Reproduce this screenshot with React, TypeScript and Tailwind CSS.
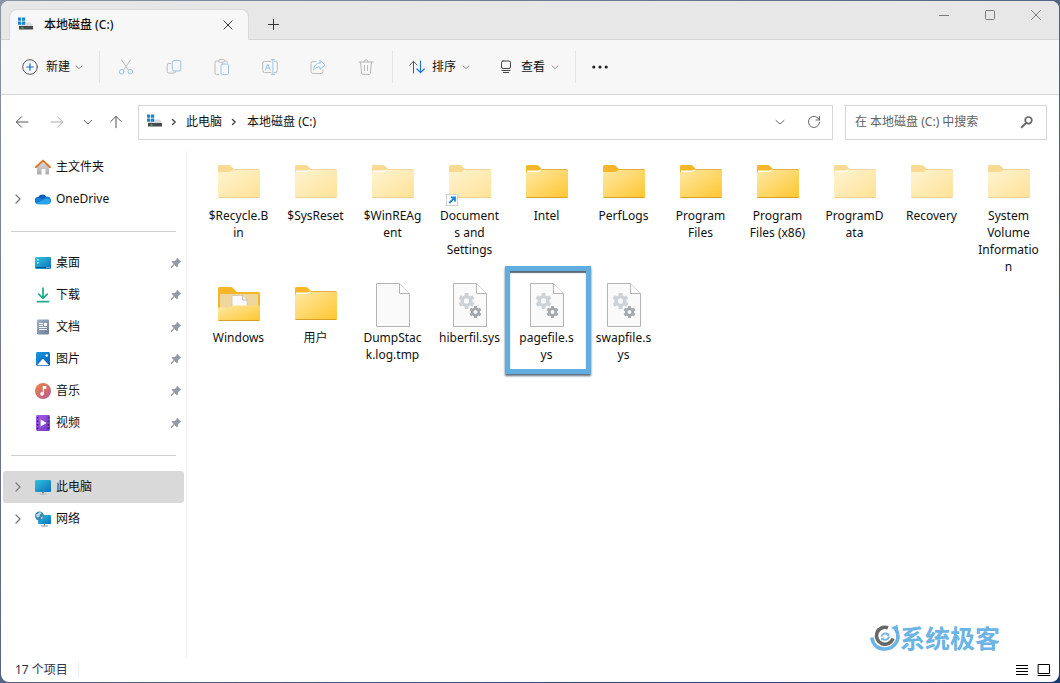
import { ReactNode } from 'react';

type FileKind = 'folder' | 'folder-open' | 'blank' | 'system';

interface FileItem {
    name: string;
    kind: FileKind;
    hidden?: boolean;
    filled?: boolean;
    shortcut?: boolean;
    highlighted?: boolean;
}

const files: FileItem[] = [
    { name: '$Recycle.B\nin', kind: 'folder', hidden: true },
    { name: '$SysReset', kind: 'folder', hidden: true, filled: true },
    { name: '$WinREAg\nent', kind: 'folder', hidden: true, filled: true },
    { name: 'Document\ns and\nSettings', kind: 'folder', hidden: true, shortcut: true },
    { name: 'Intel', kind: 'folder', filled: true },
    { name: 'PerfLogs', kind: 'folder' },
    { name: 'Program\nFiles', kind: 'folder', filled: true },
    { name: 'Program\nFiles (x86)', kind: 'folder', filled: true },
    { name: 'ProgramD\nata', kind: 'folder', hidden: true, filled: true },
    { name: 'Recovery', kind: 'folder', hidden: true },
    { name: 'System\nVolume\nInformatio\nn', kind: 'folder', hidden: true },
    { name: 'Windows', kind: 'folder-open' },
    { name: '用户', kind: 'folder', filled: true },
    { name: 'DumpStac\nk.log.tmp', kind: 'blank' },
    { name: 'hiberfil.sys', kind: 'system' },
    { name: 'pagefile.s\nys', kind: 'system', highlighted: true },
    { name: 'swapfile.s\nys', kind: 'system' },
];

/* ---------- small line icons ---------- */

const Line = ({ children, size = 16, className = '' }: { children: ReactNode; size?: number; className?: string }) => (
    <svg width={size} height={size} viewBox={`0 0 ${size} ${size}`} fill="none" stroke="currentColor" strokeLinecap="round" strokeLinejoin="round" className={`shrink-0 ${className}`} aria-hidden="true">
        {children}
    </svg>
);

const ChevronSmall = () => (
    <Line size={8} className="text-[#8a8a8a]"><path d="M1 2.8 4 5.6 7 2.8" /></Line>
);

const ChevronRight = () => (
    <Line size={8} className="text-[#444]"><path d="M2.5 1.5 5.2 4 2.5 6.5" strokeWidth="1.4" /></Line>
);

const DriveIcon = () => (
    <svg width="16" height="16" viewBox="0 0 16 16" aria-hidden="true" className="shrink-0">
        <path d="M3 5.5h10l2 3.5H1z" fill="#d9dadb" />
        <path d="M1 9h14v3.5H1z" fill="#45494c" />
        <path d="M3.500 10.300h2v1.200h-2z" fill="#3ddc5a" />
        <path d="M0 .5h3.200v3.200H0zM4 .5h3.200v3.200H4zM0 4.500h3.200v3.200H0zM4 4.500h3.200v3.200H4z" fill="#1b84cf" />
    </svg>
);

const toolIcons: { label: string; icon: ReactNode }[] = [
    {
        label: '剪切',
        icon: (
            <Line>
                <path d="m3.5.8 6.7 10M12.5.8l-6.7 10" stroke="#b9b9b9" />
                <circle cx="3.6" cy="12.8" r="2.3" stroke="#9bc5e6" />
                <circle cx="12.4" cy="12.8" r="2.3" stroke="#9bc5e6" />
            </Line>
        ),
    },
    {
        label: '复制',
        icon: (
            <Line>
                <path d="M4.8 4.5H3A1.8 1.8 0 0 0 1.2 6.3v6A1.8 1.8 0 0 0 3 14.1h5a1.8 1.8 0 0 0 1.8-1.8" stroke="#bcbcbc" />
                <rect x="6.3" y="1.5" width="8.5" height="10.5" rx="1.8" stroke="#9bc5e6" />
            </Line>
        ),
    },
    {
        label: '粘贴',
        icon: (
            <Line>
                <path d="M4.5 2h-2A1.5 1.5 0 0 0 1 3.500V14a1.5 1.5 0 0 0 1.5 1.5H5M10.500 2h1.700a1.400 1.400 0 0 1 1.300 1.300" stroke="#bcbcbc" />
                <rect x="4.5" y=".6" width="6" height="2.6" rx="1.2" stroke="#bcbcbc" />
                <rect x="7" y="5" width="7.5" height="10.5" rx="1.2" stroke="#9bc5e6" />
            </Line>
        ),
    },
    {
        label: '重命名',
        icon: (
            <Line>
                <path d="M9 2.5H2.500A1.800 1.800 0 0 0 .7 4.300v7.400a1.800 1.800 0 0 0 1.800 1.800H9M12.500 2.500h1A1.800 1.800 0 0 1 15.300 4.300v7.400a1.800 1.800 0 0 1-1.800 1.800h-1" stroke="#bcbcbc" />
                <path d="m3.4 11 2.500-6 2.500 6M4.300 9h3.200M9.300.6h3.200M9.300 15.400h3.200M10.900.6v14.800" stroke="#9bc5e6" />
            </Line>
        ),
    },
    {
        label: '共享',
        icon: (
            <Line>
                <path d="M6 2.5H3a2 2 0 0 0-2 2v8a2 2 0 0 0 2 2h8a2 2 0 0 0 2-2V11" stroke="#bcbcbc" />
                <path d="M10 1.500 15 6l-5 4.300V8C7 8 5.200 8.800 3.700 10.800 4 7 6 4.200 10 4z" stroke="#9bc5e6" />
            </Line>
        ),
    },
    {
        label: '删除',
        icon: (
            <Line className="text-[#b7b7b7]">
                <path d="M1 3h14M5.800 3a2.200 2.200 0 0 1 4.400 0M2.500 3l1.200 11.200a1.300 1.300 0 0 0 1.300 1.200h6a1.300 1.300 0 0 0 1.300-1.200L13.500 3M6.500 6.500v5M9.500 6.500v5" />
            </Line>
        ),
    },
];

const ToolDivider = () => <span className="h-8 w-px bg-[#e4e4e4]" />;

/* ---------- coloured sidebar icons ---------- */

const Glyph = ({ children }: { children: ReactNode }) => (
    <svg width="16" height="16" viewBox="0 0 16 16" aria-hidden="true" className="shrink-0">{children}</svg>
);

const HomeIcon = () => (
    <Glyph>
        <path d="M2 7.500 8 2l6 5.500v8h-3.500V10h-4v5.500H2z" fill="url(#wall)" />
        <path d="M.9 8.200 8 1.600l7.100 6.600" fill="none" stroke="#dd762b" strokeWidth="1.9" strokeLinecap="round" strokeLinejoin="round" />
    </Glyph>
);

const CloudIcon = () => (
    <Glyph>
        <path d="M3.500 13A3.500 3.500 0 0 1 3.200 6 5 5 0 0 1 12 6.500L13 13z" fill="#0f5fba" />
        <path d="M3.400 13.200A3.400 3.400 0 0 1 1 7.500c1.800-1.400 4-.8 5.800.5l5.700-2.400C15 6 16 8 16 9.800a3.400 3.400 0 0 1-3.400 3.400z" fill="#127dd6" />
        <path d="M1.200 12.300 8.800 8.800c1.800-1 4-1.800 5.700-.6a3 3 0 0 1-1.800 5H3.400a3.300 3.300 0 0 1-2.200-.9z" fill="#28a4eb" />
    </Glyph>
);

const DesktopIcon = () => (
    <Glyph>
        <rect y="2" width="16" height="12" rx="1.2" fill="url(#screen)" />
        <path d="M2 4h1.500v1.500H2zM2 7h1.500v1.500H2z" fill="#e8fbff" />
        <path d="M1 12.500h14" stroke="#0b5788" />
        <path d="M11.500 12h1v1h-1zM13.500 12h1v1h-1z" fill="#e8fbff" />
    </Glyph>
);

const DownloadIcon = () => (
    <Glyph>
        <path d="M8 1v10M3.800 7.200 8 11.400l4.200-4.200M2.500 14.700h11" fill="none" stroke="#21a98a" strokeWidth="1.7" strokeLinecap="round" strokeLinejoin="round" />
    </Glyph>
);

const DocumentIcon = () => (
    <Glyph>
        <rect x="2" y=".5" width="12" height="15" rx="1.2" fill="url(#doc)" />
        <path d="M4 4.500h4M4 6.500h4M4 8.500h8M4 10.500h8" stroke="#fff" />
        <path d="M9 4h3v3H9z" fill="#fff" />
    </Glyph>
);

const PictureIcon = () => (
    <Glyph>
        <rect x="1" y="1" width="14" height="14" rx="1.4" fill="url(#picture)" />
        <path d="m2 14.300 5-5.600a1.300 1.300 0 0 1 2 0l5 5.600z" fill="#fff" />
        <circle cx="11.7" cy="4.5" r="1.3" fill="#fff" />
    </Glyph>
);

const MusicIcon = () => (
    <Glyph>
        <circle cx="8" cy="8" r="8" fill="url(#music)" />
        <path d="M8.300 3.300v7.500M8.300 3.600h2.500v1.600H8.300z" fill="#fff" stroke="#fff" strokeWidth="1.100" />
        <circle cx="7" cy="10.9" r="1.8" fill="#fff" />
    </Glyph>
);

const VideoIcon = () => (
    <Glyph>
        <rect x="1" y="0" width="14" height="16" rx="1.4" fill="url(#video)" />
        <path d="M2 2h1.500v1.500H2zM2 5.500h1.500V7H2zM2 9h1.500v1.500H2zM2 12.500h1.500V14H2zM12.500 2H14v1.500h-1.500zM12.500 5.500H14V7h-1.500zM12.500 9H14v1.500h-1.500zM12.500 12.500H14V14h-1.500z" fill="#3d1a7c" />
        <path d="M5.600 4.300 11.500 8l-5.900 3.700z" fill="#fff" />
    </Glyph>
);

const PcIcon = () => (
    <Glyph>
        <rect y="1" width="16" height="12" rx="1" fill="url(#screen)" />
        <path d="M7 13h2v1.500H7z" fill="#7f8890" />
        <path d="M4.500 15h7" stroke="#aab0b5" />
    </Glyph>
);

const NetworkIcon = () => (
    <Glyph>
        <rect x="3" y="4" width="13" height="9" rx=".8" fill="url(#screen)" />
        <path d="M6 15h7M9.500 13v2" stroke="#8d969d" />
        <circle cx="4.5" cy="5" r="4.5" fill="#3f87ad" />
        <path d="M1 3.500c2-.3 2.500-1.500 3.500-2.500l2 .8c-.3 1.700-2 1.500-2 3.200 0 1-1.500 2-3 1z" fill="#b5dbe8" />
        <path d="m6 6 2-.5-.7 2.500H6z" fill="#a2d0e0" />
    </Glyph>
);

const PinIcon = () => (
    <svg width="12" height="12" viewBox="0 0 12 12" aria-hidden="true" className="mr-0.5 shrink-0">
        <path d="M7 .7 11.300 5 9.700 5.500 8 7.200 7.800 9.600 7 10.400 4.600 8 1.600 11H.8v-.9l3-3L1.500 4.800l.8-.8L4.800 3.900 6.500 2.200z" fill="#939aa1" />
    </svg>
);

interface NavEntry {
    label: string;
    icon: ReactNode;
    expandable?: boolean;
    pinned?: boolean;
    selected?: boolean;
}

const navGroups: NavEntry[][] = [
    [
        { label: '主文件夹', icon: <HomeIcon /> },
        { label: 'OneDrive', icon: <CloudIcon />, expandable: true },
    ],
    [
        { label: '桌面', icon: <DesktopIcon />, pinned: true },
        { label: '下载', icon: <DownloadIcon />, pinned: true },
        { label: '文档', icon: <DocumentIcon />, pinned: true },
        { label: '图片', icon: <PictureIcon />, pinned: true },
        { label: '音乐', icon: <MusicIcon />, pinned: true },
        { label: '视频', icon: <VideoIcon />, pinned: true },
    ],
    [
        { label: '此电脑', icon: <PcIcon />, expandable: true, selected: true },
        { label: '网络', icon: <NetworkIcon />, expandable: true },
    ],
];

const NavRow = ({ entry }: { entry: NavEntry }) => (
    <a href="#" className={`flex h-8 items-center rounded-[3px] ${entry.selected ? 'bg-[#d9d9d9]' : 'hover:bg-gray-100'}`}>
        <span className="flex w-8 items-center pl-2.5">
            {entry.expandable && <Line size={10} className="text-[#7d7d7d]"><path d="m3 1 4 4-4 4" strokeWidth="1.3" /></Line>}
        </span>
        {entry.icon}
        <span className="ml-[5px] grow">{entry.label}</span>
        {entry.pinned && <PinIcon />}
    </a>
);

/* ---------- file icons ---------- */

const FolderIcon = ({ hidden, filled, shortcut }: { hidden?: boolean; filled?: boolean; shortcut?: boolean }) => (
    <svg width="48" height="48" viewBox="0 0 48 48" aria-hidden="true">
        <g opacity={hidden ? 0.5 : 1}>
            <path d="M3 8.500A1.500 1.500 0 0 1 4.500 7h9c1 0 1.700.3 2.400 1l3 3H43.500A1.500 1.500 0 0 1 45 12.500V20H3z" fill="#f5b727" />
            {filled && <path d="M4 12.500h11l3-1H43v3H4z" fill="#fff" />}
            <path d={filled ? 'M3 15.500c0-1 .7-1.500 1.500-1.500h10c1 0 1.600-.3 2.300-.9l1.400-1.200h25.300c.9 0 1.500.6 1.500 1.500V38.500A1.500 1.500 0 0 1 43.500 40h-39A1.500 1.500 0 0 1 3 38.500z' : 'M3 14h11.500c1 0 1.700-.3 2.400-.9l1.500-1.300h25.100c.9 0 1.500.6 1.500 1.500V38.500A1.500 1.500 0 0 1 43.500 40h-39A1.500 1.500 0 0 1 3 38.500z'} fill="url(#folder)" />
            <path d="M18.500 11.500h25.200" stroke="#dca53a" strokeWidth=".8" />
            <path d="M3.500 39.500h41" stroke="#d69b20" strokeWidth=".9" />
        </g>
        {shortcut && (
            <g>
                <rect x=".5" y="36.5" width="11" height="11" fill="#fff" stroke="#cfcfcf" />
                <path d="m3.300 45 5-5M4.800 39.300H9v4.200" fill="none" stroke="#1686d9" strokeWidth="1.8" />
            </g>
        )}
    </svg>
);

const OpenFolderIcon = () => (
    <svg width="48" height="48" viewBox="0 0 48 48" aria-hidden="true">
        <path d="M3 8.500A1.500 1.500 0 0 1 4.500 7h11c1 0 1.700.3 2.400 1l4 4H43.500A1.500 1.500 0 0 1 45 13.500V30H3z" fill="#f5b727" />
        <rect x="5" y="14" width="38" height="16" fill="#eed69d" />
        <path d="M17 15.500h11l4 4V30H17z" fill="#fafafa" stroke="#cfc5ac" strokeWidth=".8" />
        <path d="M27.500 15.500V20H32" fill="none" stroke="#b9b1a0" strokeWidth=".9" />
        <path d="M3 27.500h11.500c1 0 1.600-.3 2.300-.9L18 25.500h25.500A1.500 1.500 0 0 1 45 27v12.500a1.500 1.500 0 0 1-1.500 1.500h-39A1.500 1.500 0 0 1 3 39.500z" fill="url(#folder)" />
        <path d="M3.500 40.500h41" stroke="#d69b20" strokeWidth=".9" />
    </svg>
);

// teeth are drawn as short strokes around the ring
const Gear = ({ cx, cy, r, color }: { cx: number; cy: number; r: number; color: string }) => (
    <g stroke={color} fill="none">
        <circle cx={cx} cy={cy} r={r * 0.54} strokeWidth={r * 0.42} />
        {[0, 60, 120, 180, 240, 300].map((angle) => (
            <path key={angle} d={`M${cx} ${cy - r * 0.65}V${cy - r}`} strokeWidth={r * 0.48} transform={`rotate(${angle} ${cx} ${cy})`} />
        ))}
    </g>
);

const DocIcon = ({ system }: { system?: boolean }) => (
    <svg width="48" height="48" viewBox="0 0 48 48" aria-hidden="true">
        <path d="M7.500 3.500h23l10 10v33h-33z" fill="#fafafa" stroke="#b4b4b4" />
        <path d="M30.500 3.500v10h10" fill="#fff" stroke="#b4b4b4" />
        {system && (
            <>
                <Gear cx={20.5} cy={21} r={8} color="#cdd2d6" />
                <Gear cx={29.5} cy={32} r={6} color="#a2a7ab" />
            </>
        )}
    </svg>
);

const FileTile = ({ file }: { file: FileItem }) => (
    <li className="relative min-h-[122px]">
        <button className="flex w-full flex-col items-center">
            {file.kind === 'folder' && <FolderIcon hidden={file.hidden} filled={file.filled} shortcut={file.shortcut} />}
            {file.kind === 'folder-open' && <OpenFolderIcon />}
            {file.kind === 'blank' && <DocIcon />}
            {file.kind === 'system' && <DocIcon system />}
            <span className="mt-px whitespace-pre text-center leading-[17px]">{file.name}</span>
        </button>
        {file.highlighted && (
            <span className="pointer-events-none absolute -top-3.5 -left-[3px] h-[108px] w-[86px] border-5 border-[#62addf] shadow-[0_2px_2px_#5b6b78,inset_0_2px_1px_#5b6b78]" />
        )}
    </li>
);

/* ---------- shared gradients ---------- */

const Gradients = () => (
    <svg width="0" height="0" className="absolute" aria-hidden="true">
        <defs>
            <linearGradient id="folder" x1="0" y1="0" x2="1" y2="1"><stop stopColor="#ffe9a5" /><stop offset="1" stopColor="#fec62f" /></linearGradient>
            <linearGradient id="screen" x1="0" y1="0" x2="1" y2="1"><stop stopColor="#30c5dd" /><stop offset="1" stopColor="#0c6fbd" /></linearGradient>
            <linearGradient id="doc" x1="0" y1="0" x2="1" y2="1"><stop stopColor="#9fb1c6" /><stop offset="1" stopColor="#6c7f99" /></linearGradient>
            <linearGradient id="wall" x1="0" y1="0" x2="0" y2="1"><stop stopColor="#dedede" /><stop offset="1" stopColor="#a9a9ab" /></linearGradient>
            <linearGradient id="picture" x1="0" y1="0" x2="1" y2="1"><stop stopColor="#1798e2" /><stop offset="1" stopColor="#0c5fae" /></linearGradient>
            <linearGradient id="music" x1="0" y1="0" x2="1" y2="1"><stop stopColor="#ee8449" /><stop offset="1" stopColor="#b65a92" /></linearGradient>
            <linearGradient id="video" x1="0" y1="0" x2="1" y2="1"><stop stopColor="#a55ce6" /><stop offset="1" stopColor="#7536c6" /></linearGradient>
        </defs>
    </svg>
);

const TitleBar = () => (
    <header className="flex h-[39px] border-b border-[#d5d5d5] bg-[#e7e7e7] pl-2">
        <div className="z-10 mt-2 -mb-px flex w-60 items-center rounded-t-lg border border-b-0 border-[#dadada] bg-[#f7f7f7] px-2">
            <DriveIcon />
            <h1 className="ml-2.5 grow font-medium">本地磁盘 (C:)</h1>
            <button aria-label="关闭标签页" className="flex size-6 items-center justify-center text-[#333]">
                <Line size={10}><path d="m1 1 8 8M9 1 1 9" /></Line>
            </button>
        </div>
        <button aria-label="新建标签页" className="mt-2 flex w-12 items-center justify-center text-[#333]">
            <Line size={11}><path d="M5.500.5v10M.5 5.500h10" /></Line>
        </button>
        <div className="ml-auto flex h-7 items-center text-[#7c7c7c]">
            <button aria-label="最小化" className="flex h-full w-[46px] items-center justify-center"><Line size={10}><path d="M0 5.500h10" /></Line></button>
            <button aria-label="最大化" className="flex h-full w-[46px] items-center justify-center"><Line size={10}><rect x=".5" y=".5" width="9" height="9" rx="1" /></Line></button>
            <button aria-label="关闭" className="flex h-full w-[46px] items-center justify-center"><Line size={10}><path d="m.5.5 9 9M9.500.5l-9 9" /></Line></button>
        </div>
    </header>
);

const Toolbar = () => (
    <div className="flex h-[55px] items-center border-b border-[#d5d5d5] bg-[#f7f7f7] pl-[21px]">
        <button className="flex h-8 items-center">
            <Line><circle cx="8" cy="8" r="7.3" stroke="#555" /><path d="M8 4.800v6.400M4.800 8h6.400" stroke="#0f6cbd" strokeWidth="1.2" /></Line>
            <span className="mr-[5px] ml-2">新建</span>
            <ChevronSmall />
        </button>
        <span className="w-4" />
        <ToolDivider />
        <div className="flex px-0.5">
            {toolIcons.map(({ label, icon }) => (
                <button key={label} aria-label={label} disabled className="flex h-8 w-12 items-center justify-center">{icon}</button>
            ))}
        </div>
        <ToolDivider />
        <button className="ml-4 flex h-8 items-center">
            <Line>
                <path d="M4.500 14V2.300M.8 6l3.700-3.700L8 6" stroke="#555" />
                <path d="M11.500 2v11.700M8 10l3.500 3.700L15.200 10" stroke="#1f77cc" strokeWidth="1.2" />
            </Line>
            <span className="mr-1.5 ml-[7px]">排序</span>
            <ChevronSmall />
        </button>
        <button className="ml-7 flex h-8 items-center">
            <Line className="text-[#444]">
                <rect x="3.5" y="2" width="9" height="7.5" rx="1.5" />
                <path d="M4 11.500h8M5.500 13.500h5" />
            </Line>
            <span className="mr-1.5 ml-[7px]">查看</span>
            <ChevronSmall />
        </button>
        <span className="w-4" />
        <ToolDivider />
        <button aria-label="查看更多" className="flex h-8 w-12 items-center justify-center">
            <svg width="18" height="4" viewBox="0 0 18 4" fill="#222"><circle cx="2.8" cy="2" r="1.6" /><circle cx="9" cy="2" r="1.6" /><circle cx="15.2" cy="2" r="1.6" /></svg>
        </button>
    </div>
);

const AddressRow = () => (
    <div className="flex h-[54px] items-center pr-3 pl-[13px]">
        <button aria-label="后退" className="w-[35px] text-[#555]"><Line><path d="M2.500 8H14M7.500 2.800 2.300 8l5.200 5.200" /></Line></button>
        <button aria-label="前进" className="w-[34px] text-[#aaa]"><Line><path d="M2 8h11.500M8.500 2.800 13.700 8l-5.200 5.200" /></Line></button>
        <button aria-label="最近浏览的位置" className="w-[25px] text-[#555]"><Line size={10}><path d="M1 3.200 4.800 7l3.800-3.800" /></Line></button>
        <button aria-label="上移" className="w-[30px] text-[#555]"><Line><path d="M8 13.700V2.500M2.800 7.500 8 2.300l5.200 5.200" /></Line></button>
        <nav aria-label="地址" className="flex h-[35px] grow items-center border border-[#d6d6d6] bg-white pr-2 pl-2">
            <DriveIcon />
            <span className="ml-[7px]"><ChevronRight /></span>
            <a href="#" className="mr-2 ml-2">此电脑</a>
            <ChevronRight />
            <a href="#" className="ml-[9px] grow">本地磁盘 (C:)</a>
            <button aria-label="以前的位置" className="flex w-6 justify-center text-[#666]"><Line size={10}><path d="M1 3.500 5 7l4-3.500" /></Line></button>
            <button aria-label="刷新" className="ml-3 flex w-5 justify-center text-[#666]"><Line size={14}><path d="M12.300 5A5.600 5.600 0 1 0 12.600 7.500M12.500 1.500V5H9" /></Line></button>
        </nav>
        <form role="search" className="ml-3 flex h-[35px] w-[202px] items-center border border-[#d6d6d6] bg-white pr-3 pl-[9px]">
            <input aria-label="搜索" placeholder="在 本地磁盘 (C:) 中搜索" className="w-0 grow outline-none placeholder:text-[#606060]" />
            <button type="button" aria-label="开始搜索" className="text-[#666]">
                <Line size={14}><circle cx="8.5" cy="5.3" r="3.3" strokeWidth="1.7" /><path d="m6 8-4.300 4.300" strokeWidth="1.9" /></Line>
            </button>
        </form>
    </div>
);

const Watermark = () => (
    <div className="absolute right-[59px] bottom-[30px] flex items-center text-[#6bb4e4]">
        <svg width="30" height="28" viewBox="0 0 30 28" fill="none" aria-hidden="true">
            <path d="M1.800 13.500C3 21.500 8.500 25 14.500 25 22 25 28 19 28 12.500c0-3-1-5.500-2.500-7.500" stroke="#6bb4e4" strokeWidth="3.6" />
            <path d="m21 4 6.500-3.500L28.500 8z" fill="#6bb4e4" />
            <path d="M18 3.800a8.500 8.500 0 1 0 5 10.700" stroke="#686868" strokeWidth="3.6" />
            <path d="M11.500 12.500a4 4 0 0 1 6.500-2M19 12.500a4 4 0 0 1-6.500 2.500" stroke="#6bb4e4" strokeWidth="1.8" />
            <path d="m16.500 12 3-.2-.2-3zM14 13.500l-3 .3.300 3z" fill="#6bb4e4" />
        </svg>
        <span className="text-[25px] leading-7 font-bold">系统极客</span>
    </div>
);

const App = () => (
    <div className="flex min-h-screen bg-linear-to-br from-[#8b94a3] via-[#536583] to-[#17386f] p-px font-['Noto_Sans','Noto_Sans_CJK_SC',sans-serif] text-xs text-[#111]">
        <Gradients />
        <div className="relative flex grow flex-col overflow-hidden rounded-lg bg-white">
            <TitleBar />
            <Toolbar />
            <AddressRow />
            <div className="flex grow">
                <nav aria-label="导航窗格" className="mt-0.5 w-[186px] shrink-0 border-r border-[#f0f0f0] px-0.5">
                    {navGroups.map((group, index) => (
                        <div key={index}>
                            {index > 0 && <div className="flex h-8 items-center px-2"><hr className="grow border-[#cfcfcf]" /></div>}
                            {group.map((entry) => <NavRow key={entry.label} entry={entry} />)}
                        </div>
                    ))}
                </nav>
                <main className="grow pt-[9px] pl-[13px]">
                    <ul className="grid grid-cols-[repeat(auto-fill,77px)]">
                        {files.map((file) => <FileTile key={file.name} file={file} />)}
                    </ul>
                </main>
            </div>
            <footer className="flex h-6 items-center pr-2 pl-3.5 text-[#2a3350]">
                <span className="border-r border-[#eee] pr-2.5">17 个项目</span>
                <button aria-label="详细信息" className="ml-auto text-black"><Line size={14}><path d="M1 2.500h12M1 5.500h12M1 8.500h12M1 11.500h12" strokeLinecap="butt" /></Line></button>
                <button aria-label="大图标" className="ml-2 text-black"><Line size={14}><path d="M1.500 1.500h11v9h-11zM1 12.500h12" /></Line></button>
            </footer>
            <Watermark />
        </div>
    </div>
);

export default App;
